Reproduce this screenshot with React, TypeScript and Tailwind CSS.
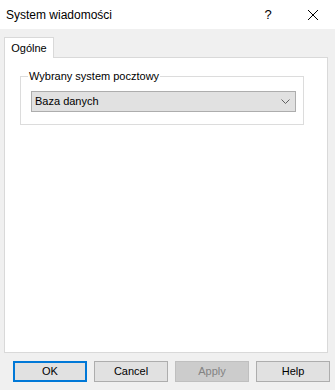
import React from "react";

const font = { fontFamily: '"Liberation Sans", Arial, sans-serif' };

function Btn({ label, kind }: { label: string; kind?: "default" | "disabled" }) {
  const base = "w-[74px] h-[21px] flex items-center justify-center text-[11px] box-border";
  if (kind === "default")
    return <div className={`${base} bg-[#e1e1e1] border-2 border-[#0078d7] text-black`}>{label}</div>;
  if (kind === "disabled")
    return <div className={`${base} bg-[#cccccc] border border-[#bfbfbf] text-[#838383]`}>{label}</div>;
  return <div className={`${base} bg-[#e1e1e1] border border-[#adadad] text-black`}>{label}</div>;
}

export default function App() {
  return (
    <div className="w-[335px] h-[390px] bg-[#f0f0f0] flex flex-col overflow-hidden" style={font}>
      {/* title bar */}
      <div className="h-[29px] bg-white flex items-center shrink-0">
        <span className="ml-[6px] text-[12px] text-black">System wiadomości</span>
        <span className="ml-auto text-[13px] text-black w-[10px] text-center mr-[34px]">?</span>
        <svg width="12" height="12" viewBox="0 0 12 12" className="mr-[16px]">
          <path d="M1 1 L11 11 M11 1 L1 11" stroke="#000" strokeWidth="1" fill="none" />
        </svg>
      </div>

      {/* tabs */}
      <div className="mt-[8px] ml-[4px] flex shrink-0">
        <div className="relative z-10 -mb-px w-[50px] h-[21px] bg-white border-t border-l border-r border-[#d9d9d9] flex items-center justify-center text-[11px] text-black">
          Ogólne
        </div>
      </div>
      <div className="ml-[4px] w-[324px] h-[296px] bg-white border border-[#d9d9d9] shrink-0 box-border">
        <div className="relative ml-[15px] mt-[18px] w-[284px] h-[49px] border border-[#dcdcdc] box-border pt-[14px] pl-[10px]">
          <span className="absolute -top-[8px] left-[7px] px-[1px] bg-white text-[11px] leading-[14px] text-black">
            Wybrany system pocztowy
          </span>
          <div className="w-[265px] h-[21px] bg-[#e1e1e1] border border-[#adadad] box-border flex items-center pl-[3px] pr-[5px] text-[11px] text-black">
            <span>Baza danych</span>
            <svg width="9" height="5" viewBox="0 0 9 5" className="ml-auto">
              <path d="M0.5 0.5 L4.5 4.5 L8.5 0.5" stroke="#606060" strokeWidth="1" fill="none" />
            </svg>
          </div>
        </div>
      </div>

      {/* buttons */}
      <div className="mt-[8px] flex justify-end gap-[7px] pr-[5px] shrink-0">
        <Btn label="OK" kind="default" />
        <Btn label="Cancel" />
        <Btn label="Apply" kind="disabled" />
        <Btn label="Help" />
      </div>
    </div>
  );
}
